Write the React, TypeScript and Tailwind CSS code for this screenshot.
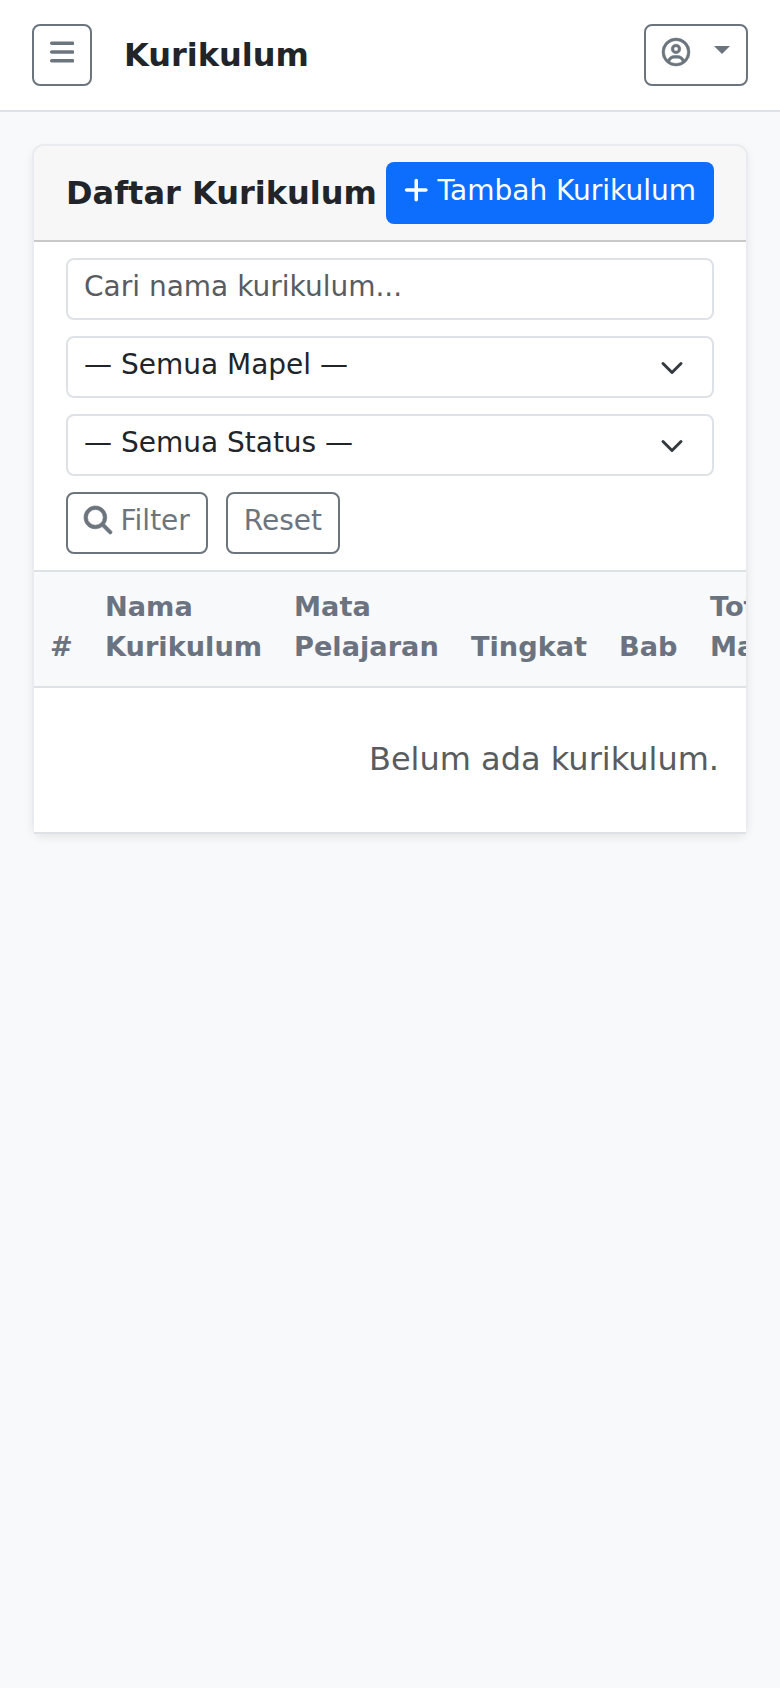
import { FaBars, FaMagnifyingGlass, FaPlus, FaRegCircleUser } from 'react-icons/fa6';

const columns = [
  { label: '#', className: 'w-[55px]' },
  { label: 'Nama Kurikulum', className: 'w-[189px]' },
  { label: 'Mata Pelajaran', className: 'w-[177px]' },
  { label: 'Tingkat', className: 'w-[148px]' },
  { label: 'Bab', className: 'w-[91px]' },
  { label: 'Total Materi', className: 'w-[128px]' },
  { label: '', className: 'w-[232px]' },
];

const outlineButton =
  'flex h-[62px] items-start rounded-lg border-2 border-[#6c757d] pt-[6px] text-[28px] leading-[42px] text-[#6c757d]';

function SelectField({ label }: { label: string }) {
  return (
    <button className="flex h-[62px] w-full items-start justify-between rounded-lg border-2 border-[#dee2e6] bg-white pt-[6px] pr-[28px] pl-4 text-[28px] leading-[42px]">
      <span>{label}</span>
      <svg viewBox="0 0 16 16" className="mt-3 h-6 w-6" fill="none" stroke="#343a40" strokeWidth="2" strokeLinecap="round" strokeLinejoin="round">
        <path d="m2 5 6 6 6-6" />
      </svg>
    </button>
  );
}

export default function App() {
  return (
    <div className="min-h-[1688px] w-[780px] bg-[#f8f9fb] font-['DejaVu_Sans',sans-serif] text-[#212529]">
      <header className="flex h-28 items-center border-b-2 border-[#dee2e6] bg-white px-8">
        <button className={`${outlineButton} w-[60px] justify-center`} aria-label="Menu">
          <FaBars className="mt-[5.5px] h-[28px] w-[24.5px]" />
        </button>
        <h1 className="ml-8 text-[32px] leading-[48px] font-bold">Kurikulum</h1>
        <button className={`${outlineButton} ml-auto px-4`} aria-label="Akun">
          <FaRegCircleUser className="mt-[5.5px] h-[28px] w-[28px] overflow-visible stroke-[10]" />
          <span className="mt-[14px] ml-[24px] border-x-[8.4px] border-t-[8.4px] border-x-transparent border-t-[#6c757d]" />
        </button>
      </header>

      <main className="p-8">
        <section className="rounded-xl border-2 border-[#e9ebee] bg-white shadow-[0_4px_8px_rgba(0,0,0,0.075)]">
          <div className="flex h-24 items-center justify-between rounded-t-[10px] border-b-2 border-[#c8c8c8] bg-[#f7f7f7] px-8">
            <h2 className="text-[32px] leading-[48px] font-bold whitespace-nowrap">Daftar Kurikulum</h2>
            <button className="flex h-[62px] items-start rounded-lg bg-[#0d6efd] px-[18px] pt-2 text-[28px] leading-[42px] whitespace-nowrap text-white">
              <FaPlus className="mt-[5.5px] mr-[9px] h-[28px] w-[24.5px]" />
              Tambah Kurikulum
            </button>
          </div>

          <div className="flex flex-col gap-4 border-b-2 border-[#dee2e6] px-8 py-4">
            <input
              type="text"
              placeholder="Cari nama kurikulum..."
              className="h-[62px] w-full rounded-lg border-2 border-[#dee2e6] bg-white px-4 pt-[5px] pb-[11px] text-[28px] leading-[42px] placeholder:text-[#595c5f]"
            />
            <SelectField label="— Semua Mapel —" />
            <SelectField label="— Semua Status —" />
            <div className="flex gap-[18px]">
              <button className={`${outlineButton} px-4`}>
                <FaMagnifyingGlass className="mt-[5.5px] mr-[8.5px] h-[28px] w-[28px] overflow-visible stroke-[12]" />
                Filter
              </button>
              <button className={`${outlineButton} px-4`}>Reset</button>
            </div>
          </div>

          {/* the table sits over the bottom border of the card */}
          <div className="-mb-0.5 overflow-hidden bg-white">
            <table className="w-[1020px] table-fixed border-separate border-spacing-0">
              <thead>
                <tr className="h-[116px] bg-[#f8f9fb] text-left text-[27.2px] leading-[40px] text-[#6b7280]">
                  {columns.map((column) => (
                    <th key={column.label} className={`${column.className} border-b-2 border-[#dee2e6] px-4 pt-0 pb-[19px] align-bottom font-bold`}>
                      {column.label}
                    </th>
                  ))}
                </tr>
              </thead>
              <tbody>
                <tr>
                  <td colSpan={columns.length} className="h-[146px] border-b-2 border-[#dee2e6] pt-0 pb-[2px] text-center text-[32px] leading-[48px] text-[#595c5f]">
                    Belum ada kurikulum.
                  </td>
                </tr>
              </tbody>
            </table>
          </div>
        </section>
      </main>
    </div>
  );
}
